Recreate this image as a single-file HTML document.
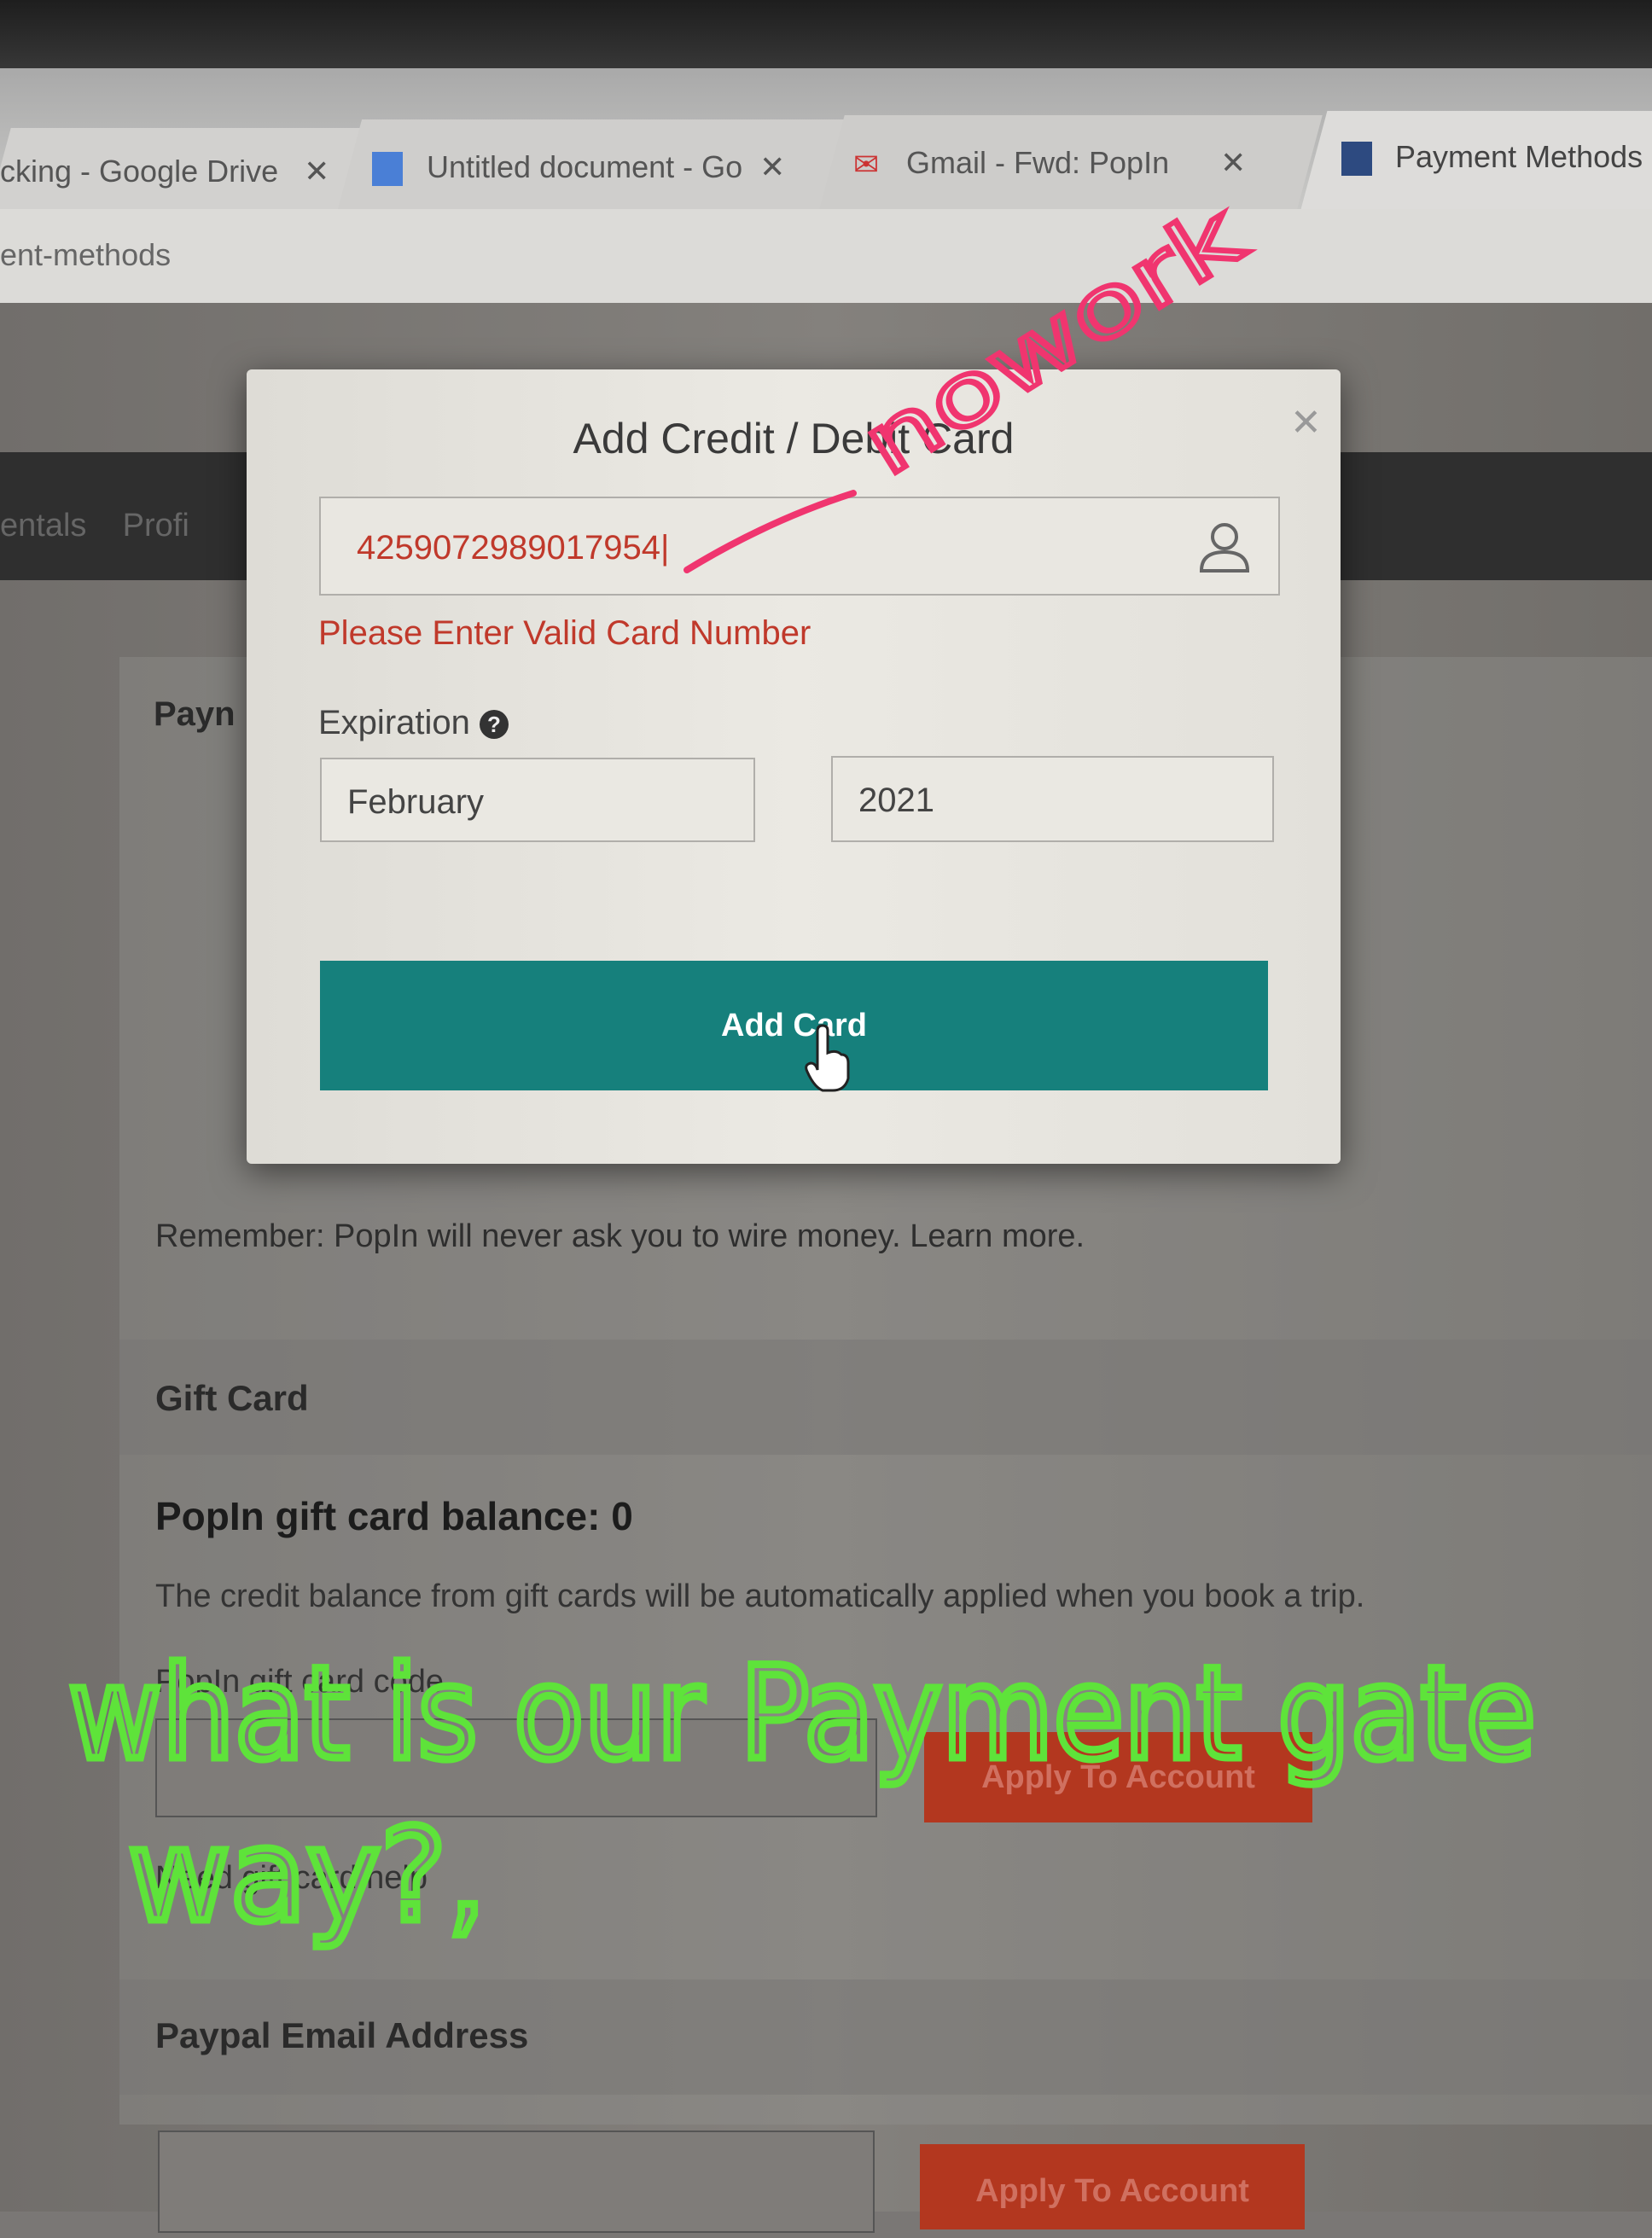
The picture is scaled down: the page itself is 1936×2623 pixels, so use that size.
<!DOCTYPE html>
<html><head><meta charset="utf-8"><style>
*{margin:0;padding:0;box-sizing:border-box}
body{width:1936px;height:2592px;overflow:hidden;position:relative;background:#7a7775;font-family:"Liberation Sans",sans-serif}
.a{position:absolute}
</style></head><body>
<div class="a" style="left:0;top:0;width:1936px;height:90px;background:linear-gradient(#1e1e1e,#3a3a3a)"></div>
<div class="a" style="left:0;top:80px;width:1936px;height:165px;background:linear-gradient(#a9a9a9,#c9c9c7)"></div>
<div class="a" style="left:0;top:150px;width:420px;height:95px;background:#d2d1cf;transform:skewX(-15deg)"></div>
<div class="a" style="left:410px;top:140px;width:570px;height:105px;background:#cfcecc;transform:skewX(-15deg)"></div>
<div class="a" style="left:975px;top:135px;width:560px;height:110px;background:#cdccca;transform:skewX(-15deg)"></div>
<div class="a" style="left:1540px;top:130px;width:420px;height:115px;background:#dddcda;transform:skewX(-15deg)"></div>
<div class="a" style="left:0;top:180px;font-size:36px;color:#555">cking - Google Drive &nbsp;&nbsp;✕</div>
<div class="a" style="left:436px;top:178px;width:36px;height:40px;background:#4a7fd6"></div>
<div class="a" style="left:500px;top:175px;font-size:36px;color:#555">Untitled document - Go &nbsp;✕</div>
<div class="a" style="left:1000px;top:172px;font-size:36px;color:#c33">✉</div>
<div class="a" style="left:1062px;top:170px;font-size:36px;color:#555">Gmail - Fwd: PopIn &nbsp;&nbsp;&nbsp;&nbsp;&nbsp;✕</div>
<div class="a" style="left:1572px;top:166px;width:36px;height:40px;background:#2d4a80"></div>
<div class="a" style="left:1635px;top:163px;font-size:36px;color:#444">Payment Methods</div>
<div class="a" style="left:0;top:245px;width:1936px;height:110px;background:#dcdbd8"></div>
<div class="a" style="left:0;top:278px;font-size:36px;color:#666">ent-methods</div>
<div class="a" style="left:0;top:355px;width:1936px;height:2237px;background:linear-gradient(90deg,#716e6b,#84817d 50%,#716e6a)"></div>
<div class="a" style="left:0;top:530px;width:1936px;height:150px;background:#2f2f2f"></div>
<div class="a" style="left:0;top:595px;font-size:38px;color:#666">entals &nbsp;&nbsp;&nbsp;Profi</div>
<div class="a" style="left:140px;top:770px;width:1800px;height:1720px;background:rgba(150,148,145,.35)"></div>
<div class="a" style="left:180px;top:815px;font-size:40px;font-weight:bold;color:#2a2a2a">Payn</div>
<div class="a" style="left:182px;top:1428px;font-size:38px;color:#2e2e2e">Remember: PopIn will never ask you to wire money. Learn more.</div>
<div class="a" style="left:140px;top:1570px;width:1800px;height:135px;background:rgba(120,118,115,.5)"></div>
<div class="a" style="left:182px;top:1615px;font-size:42px;font-weight:bold;color:#2a2a2a">Gift Card</div>
<div class="a" style="left:182px;top:1750px;font-size:46px;font-weight:bold;color:#1c1c1c">PopIn gift card balance: 0</div>
<div class="a" style="left:182px;top:1850px;font-size:38px;color:#333">The credit balance from gift cards will be automatically applied when you book a trip.</div>
<div class="a" style="left:182px;top:1950px;font-size:38px;color:#333">PopIn gift card code</div>
<div class="a" style="left:182px;top:2014px;width:846px;height:116px;border:2px solid #555;background:#7f7c79"></div>
<div class="a" style="left:1083px;top:2030px;width:455px;height:106px;background:#b3371f;color:#d07060;font-size:38px;font-weight:bold;text-align:center;line-height:106px">Apply To Account</div>
<div class="a" style="left:182px;top:2180px;font-size:38px;color:#333">Need gift card help</div>
<div class="a" style="left:140px;top:2320px;width:1800px;height:135px;background:rgba(120,118,115,.5)"></div>
<div class="a" style="left:182px;top:2362px;font-size:42px;font-weight:bold;color:#2a2a2a">Paypal Email Address</div>
<div class="a" style="left:185px;top:2497px;width:840px;height:120px;border:2px solid #555;background:#7f7c79"></div>
<div class="a" style="left:1078px;top:2513px;width:451px;height:100px;background:#b3371f;color:#d07060;font-size:38px;font-weight:bold;text-align:center;line-height:110px">Apply To Account</div>

<div class="a" style="left:289px;top:433px;width:1282px;height:931px;background:linear-gradient(90deg,#dedcd6,#ebe9e3 50%,#e2e0da);border-radius:6px;box-shadow:0 10px 40px rgba(0,0,0,.5)"></div>
<div class="a" style="left:289px;top:485px;width:1282px;text-align:center;font-size:50px;color:#3a3a3a">Add Credit / Debit Card</div>
<div class="a" style="left:1512px;top:470px;font-size:44px;color:#999">✕</div>
<div class="a" style="left:374px;top:582px;width:1126px;height:116px;border:2px solid #b0aeaa;background:#e9e7e1"></div>
<div class="a" style="left:418px;top:620px;font-size:40px;color:#c0392b">4259072989017954|</div>
<svg class="a" style="left:1400px;top:605px" width="70" height="70" viewBox="0 0 70 70"><circle cx="35" cy="24" r="14" fill="none" stroke="#666" stroke-width="4"/><path d="M8 64 Q8 42 35 42 Q62 42 62 64 Z" fill="none" stroke="#666" stroke-width="4"/></svg>
<div class="a" style="left:373px;top:720px;font-size:40px;color:#c0392b">Please Enter Valid Card Number</div>
<div class="a" style="left:373px;top:825px;font-size:40px;color:#444">Expiration <span style="display:inline-block;width:34px;height:34px;border-radius:50%;background:#333;color:#eee;font-size:26px;text-align:center;line-height:34px;font-weight:bold;vertical-align:middle">?</span></div>
<div class="a" style="left:375px;top:888px;width:510px;height:99px;border:2px solid #b0aeaa;background:#eae8e2;font-size:40px;color:#444;padding:28px 30px">February</div>
<div class="a" style="left:974px;top:886px;width:519px;height:101px;border:2px solid #b0aeaa;background:#eae8e2;font-size:40px;color:#444;padding:28px 30px">2021</div>
<div class="a" style="left:375px;top:1126px;width:1111px;height:152px;background:#16807c;color:#fff;font-size:38px;font-weight:bold;text-align:center;line-height:152px">Add Card</div>
<svg class="a" style="left:940px;top:1200px" width="60" height="80" viewBox="0 0 60 80"><path d="M18 8 Q18 2 24 2 Q30 2 30 8 L30 34 Q40 30 46 36 Q54 36 54 46 L54 64 Q50 78 36 78 L24 78 Q14 74 6 56 Q2 48 10 46 Q16 46 18 54 Z" fill="#fff" stroke="#222" stroke-width="3"/></svg>

<svg class="a" style="left:0;top:0" width="1936" height="2592">
<path d="M805 668 Q900 610 1000 578" fill="none" stroke="#f0356f" stroke-width="8" stroke-linecap="round"/>
<text x="1040" y="560" font-family="'DejaVu Sans',sans-serif" font-size="100" textLength="500" lengthAdjust="spacingAndGlyphs" fill="none" stroke="#f0356f" stroke-width="6" transform="rotate(-32 1040 560)">nowork</text>
<text x="80" y="2060" font-family="'DejaVu Sans',sans-serif" font-size="150" textLength="1720" lengthAdjust="spacingAndGlyphs" fill="none" stroke="#5ee33a" stroke-width="9">what is our Payment gate</text>
<text x="150" y="2250" font-family="'DejaVu Sans',sans-serif" font-size="150" textLength="420" lengthAdjust="spacingAndGlyphs" fill="none" stroke="#5ee33a" stroke-width="9">way?,</text>
</svg>
</body></html>
